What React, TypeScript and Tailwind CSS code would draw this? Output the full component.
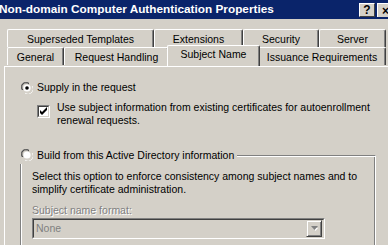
import React from 'react'

// Classic Win2000-style dialog: "Subject Name" tab

function Radio({ checked }: { checked?: boolean }) {
  return (
    <svg width="12" height="12" viewBox="0 0 12 12" className="shrink-0">
      <path d="M1 8 A5 5 0 0 1 8 1" stroke="#808080" fill="none" />
      <path d="M2 8 A4 4 0 0 1 8 2" stroke="#404040" fill="none" />
      <path d="M4 11 A5 5 0 0 0 11 4" stroke="#ffffff" fill="none" />
      <path d="M4 10 A4 4 0 0 0 10 4" stroke="#d4d0c8" fill="none" />
      <circle cx="6" cy="6" r="3.6" fill="#ffffff" />
      {checked && <circle cx="6" cy="6" r="1.8" fill="#000000" />}
    </svg>
  )
}

function Checkbox({ checked }: { checked?: boolean }) {
  return (
    <div className="w-[13px] h-[13px] shrink-0 border-t border-l border-t-[#808080] border-l-[#808080] border-b border-r border-b-white border-r-white">
      <div className="w-full h-full bg-white border-t border-l border-t-[#404040] border-l-[#404040] border-b border-r border-b-[#d4d0c8] border-r-[#d4d0c8]">
        {checked && (
          <svg width="9" height="9" viewBox="0 0 9 9">
            <path d="M1 3v3l2 2 5-5V0L3 5z" fill="#000" />
          </svg>
        )}
      </div>
    </div>
  )
}

function Tab({ label, w, selected }: { label: string; w: string; selected?: boolean }) {
  return (
    <div
      className={`${w} ${selected ? 'h-[21px] -mt-[2px] -mx-[2px] z-10 bg-[#d4d0c8]' : 'h-[18px]'} relative shrink-0 flex items-center justify-center border-t border-l border-t-white border-l-white border-r border-r-[#404040] rounded-t-[2px] shadow-[inset_-1px_0_0_#808080]`}
    >
      <span className={selected ? '-mt-[3px]' : 'mt-[1px]'}>{label}</span>
    </div>
  )
}

export default function App() {
  return (
    <div className="w-[388px] h-[245px] overflow-hidden bg-[#d4d0c8] flex flex-col text-[10.5px] leading-[13px] text-black font-['Liberation_Sans',Arial,sans-serif]">
      {/* barra de título */}
      <div className="h-[19px] shrink-0 bg-[#0a246a] flex items-center pr-0">
        <span className="flex-1 text-white font-bold text-[11.8px] whitespace-nowrap -ml-[1px]">
          Non-domain Computer Authentication Properties
        </span>
        <div className="flex gap-[2px] mt-[1px]">
          <div className="w-[16px] h-[14px] bg-[#d4d0c8] border-t border-l border-white border-b border-r border-b-[#404040] border-r-[#404040] flex items-center justify-center font-bold text-[12px] leading-none">
            ?
          </div>
          <div className="w-[11px] h-[14px] bg-[#d4d0c8] border-t border-l border-white flex items-center justify-end font-bold text-[12px] leading-none overflow-hidden">
            <span className="-mr-[1px]">×</span>
          </div>
        </div>
      </div>

      {/* abas */}
      <div className="flex pl-[7px] mt-[10px]">
        <Tab label="Superseded Templates" w="w-[147px]" />
        <Tab label="Extensions" w="w-[89px]" />
        <Tab label="Security" w="w-[76px]" />
        <Tab label="Server" w="w-[67px]" />
      </div>
      <div className="flex pl-[7px] relative z-10">
        <Tab label="General" w="w-[57px]" />
        <Tab label="Request Handling" w="w-[105px]" />
        <Tab label="Subject Name" w="w-[93px]" selected />
        <Tab label="Issuance Requirements" w="w-[128px]" />
      </div>

      {/* painel */}
      <div className="flex-1 ml-[4px] border-t border-l border-white pl-[16px]">
        <div className="flex items-center gap-[4px] mt-[14px] h-[13px]">
          <Radio checked />
          <span>Supply in the request</span>
        </div>
        <div className="flex items-start gap-[7px] mt-[7px] pl-[16px]">
          <div className="mt-[4px]">
            <Checkbox checked />
          </div>
          <div>
            Use subject information from existing certificates for autoenrollment
            <br />
            renewal requests.
          </div>
        </div>

        {/* grupo */}
        <div className="mt-[19px] w-[356px] -ml-[1px]">
          <div className="flex h-[18px]">
            <div className="flex items-center gap-[4px] pl-[1px] pr-[3px]">
              <Radio />
              <span>Build from this Active Directory information</span>
            </div>
            <div className="flex-1 mt-[9px] border-t border-t-[#808080] border-r border-r-white shadow-[inset_0_1px_0_#fff,inset_-1px_0_0_#808080]" />
          </div>
          <div className="border-l border-l-[#808080] border-r border-r-white shadow-[inset_1px_0_0_#fff,inset_-1px_0_0_#808080] pl-[11px] pt-[6px] pb-[10px]">
            <div>
              Select this option to enforce consistency among subject names and to
              <br />
              simplify certificate administration.
            </div>
            <div className="mt-[8px] text-[#808080] [text-shadow:1px_1px_0_#fff]">Subject name format:</div>
            <div className="mt-[1px] w-[293px] h-[21px] border-t border-l border-t-[#808080] border-l-[#808080] border-b border-r border-b-white border-r-white">
              <div className="h-full flex items-center border-t border-l border-t-[#404040] border-l-[#404040] border-b border-r border-b-[#d4d0c8] border-r-[#d4d0c8] bg-[#d4d0c8]">
                <span className="flex-1 pl-[2px] text-[#808080]">None</span>
                <div className="w-[16px] h-[17px] mr-[1px] border-t border-l border-t-[#d4d0c8] border-l-[#d4d0c8] border-b border-r border-b-[#404040] border-r-[#404040] shadow-[inset_1px_1px_0_#fff,inset_-1px_-1px_0_#808080] flex items-center justify-center">
                  <svg width="7" height="5" viewBox="0 0 7 5">
                    <path d="M1 1h5L3.5 4z" fill="#fff" transform="translate(1 1)" />
                    <path d="M0 0h7L3.5 4z" fill="#808080" />
                  </svg>
                </div>
              </div>
            </div>
          </div>
        </div>
      </div>
    </div>
  )
}
